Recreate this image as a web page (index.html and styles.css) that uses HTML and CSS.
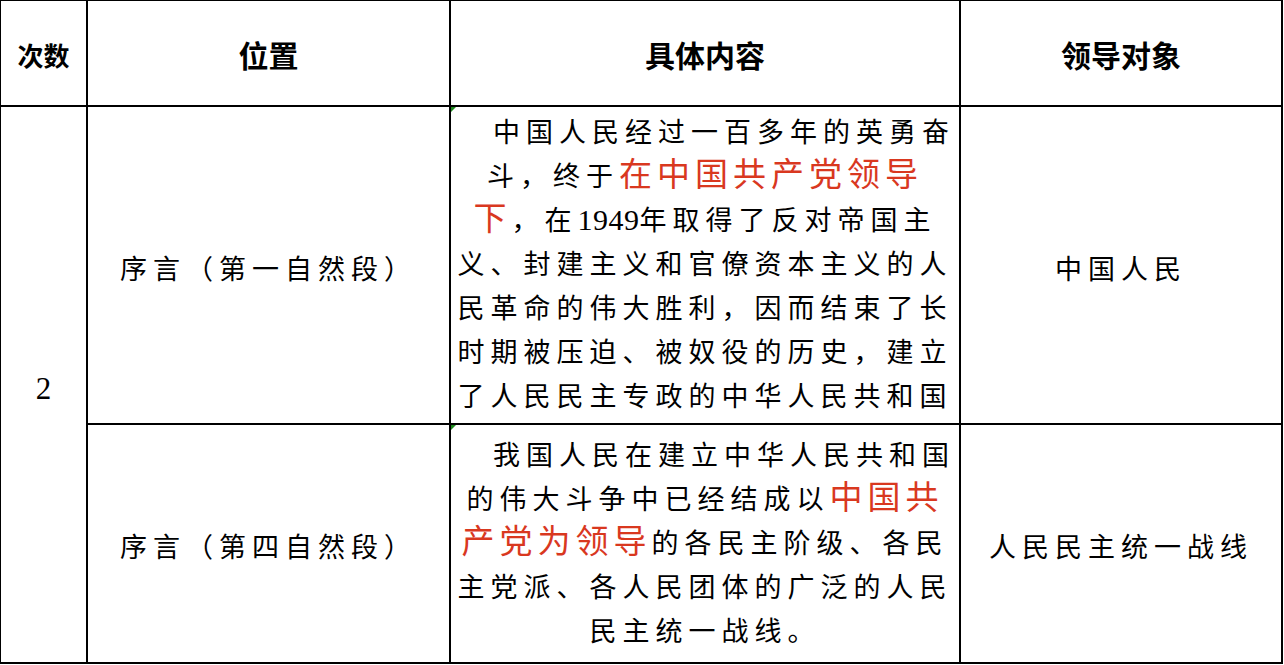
FILE: index.html
```html
<!DOCTYPE html>
<html lang="zh-CN">
<head>
<meta charset="utf-8">
<title>领导对象</title>
<link rel="stylesheet" href="styles.css">
</head>
<body>
<div class="sheet">
  <div class="cell head head-small">次数</div>
  <div class="cell head">位置</div>
  <div class="cell head">具体内容</div>
  <div class="cell head">领导对象</div>

  <div class="cell num">2</div>
  <div class="cell plain">序言（第一自然段）</div>
  <div class="cell content flagged">
    <p class="para">中国人民经过一百多年的英勇奋<br>斗，终于<span class="hl">在中国共产党领导</span><br><span class="hl">下</span>，在<span class="digits">1949</span>年取得了反对帝国主<br>义、封建主义和官僚资本主义的人<br>民革命的伟大胜利，因而结束了长<br>时期被压迫、被奴役的历史，建立<br>了人民民主专政的中华人民共和国</p>
  </div>
  <div class="cell plain">中国人民</div>

  <div class="cell plain">序言（第四自然段）</div>
  <div class="cell content flagged">
    <p class="para">我国人民在建立中华人民共和国<br>的伟大斗争中已经结成以<span class="hl">中国共</span><br><span class="hl">产党为领导</span>的各民主阶级、各民<br>主党派、各人民团体的广泛的人民<br>民主统一战线。</p>
  </div>
  <div class="cell plain">人民民主统一战线</div>
</div>
</body>
</html>
```

FILE: styles.css
```css
html, body {
  margin: 0;
  padding: 0;
  background: #ffffff;
}

body {
  font-family: "Noto Sans CJK SC", sans-serif;
  color: #000000;
}

.sheet {
  display: grid;
  grid-template-columns: 85px 361px 508px 320px;
  grid-template-rows: 104px 316px 237px;
  gap: 2px;
  padding: 1px 2px 2px 1px;
  width: max-content;
  background: #000000;
}

.cell {
  background: #ffffff;
  display: flex;
  align-items: center;
  justify-content: center;
  text-align: center;
  box-sizing: border-box;
}

.head {
  font-weight: 700;
  font-size: 30px;
  padding-top: 2px;
}

.head-small {
  font-size: 26px;
}

.num {
  grid-row: 2 / span 2;
  font-family: "Liberation Serif", serif;
  font-size: 31px;
  padding-top: 8px;
}

.plain {
  font-size: 27px;
  letter-spacing: 6px;
  padding-top: 4px;
}

.content {
  position: relative;
  padding: 0 6px;
}

.flagged::before {
  content: "";
  position: absolute;
  left: 0;
  top: 0;
  width: 0;
  height: 0;
  border-top: 5px solid #1e8a1e;
  border-right: 5px solid transparent;
}

.para {
  margin: 0 0 4px;
  width: 100%;
  font-size: 27px;
  line-height: 44px;
  letter-spacing: 6px;
  text-indent: 36px;
  white-space: nowrap;
  text-align: center;
}

.hl {
  color: #d9381f;
  font-size: 33px;
  letter-spacing: 5px;
  line-height: 1;
}

.digits {
  font-family: "Liberation Serif", serif;
  font-size: 30px;
  letter-spacing: 0.5px;
  line-height: 1;
}
```
